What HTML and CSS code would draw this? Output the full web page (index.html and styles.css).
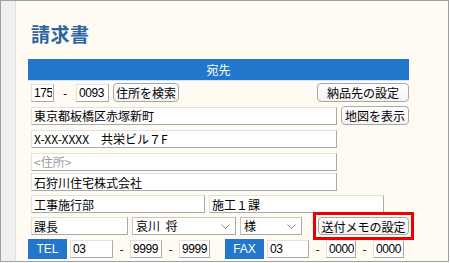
FILE: index.html
```html
<!DOCTYPE html>
<html lang="ja">
	<head>
		<meta charset="UTF-8">
		<title>請求書</title>
		<link rel="stylesheet" href="styles.css">
	</head>
	<body>
		<div class="window">
			<div class="side"></div>
			<div class="content">
				<h1 class="title">請求書</h1>
				<div class="section-bar">宛先</div>

				<div class="fields">
					<div class="row">
						<input class="field num w-23" type="text" value="175">
						<span class="dash">-</span>
						<input class="field num w-33" type="text" value="0093">
						<button class="btn w-66">住所を検索</button>
						<button class="btn w-92 push-right">納品先の設定</button>
					</div>
					<div class="row">
						<input class="field w-306" type="text" value="東京都板橋区赤塚新町">
						<button class="btn w-68">地図を表示</button>
					</div>
					<div class="row">
						<input class="field w-306" type="text" value="X-XX-XXXX　共栄ビル７F">
					</div>
					<div class="row">
						<input class="field w-306" type="text" placeholder="<住所>">
					</div>
				</div>

				<div class="fields fields-lower">
					<div class="row">
						<input class="field w-306" type="text" value="石狩川住宅株式会社">
					</div>
					<div class="row">
						<input class="field w-174" type="text" value="工事施行部">
						<input class="field w-175" type="text" value="施工１課">
					</div>
					<div class="row">
						<input class="field w-97" type="text" value="課長">
						<div class="select w-104">
							<span>哀川&nbsp;&nbsp;将</span>
							<svg class="chevron" width="9" height="5" viewBox="0 0 9 5"><path d="M0.5 0.5 L4.5 4.5 L8.5 0.5" fill="none" stroke="#8a8a8a" stroke-width="1"/></svg>
						</div>
						<div class="select w-62">
							<span>様</span>
							<svg class="chevron" width="9" height="5" viewBox="0 0 9 5"><path d="M0.5 0.5 L4.5 4.5 L8.5 0.5" fill="none" stroke="#8a8a8a" stroke-width="1"/></svg>
						</div>
						<span class="highlight">
							<button class="btn w-91 memo-btn">送付メモの設定</button>
						</span>
					</div>
					<div class="row row-tel">
						<span class="tag">TEL</span>
						<input class="field num w-43" type="text" value="03">
						<span class="dash">-</span>
						<input class="field num w-32" type="text" value="9999">
						<span class="dash">-</span>
						<input class="field num w-31" type="text" value="9999">
						<span class="tag tag-fax">FAX</span>
						<input class="field num w-42" type="text" value="03">
						<span class="dash">-</span>
						<input class="field num w-30" type="text" value="0000">
						<span class="dash">-</span>
						<input class="field num w-31" type="text" value="0000">
					</div>
				</div>
			</div>
		</div>
	</body>
</html>
```

FILE: styles.css
```css
body {
	margin: 0;
	background-color: #ffffff;
	font-family: "Noto Sans CJK JP", "Noto Sans", sans-serif;
	font-size: 12px;
	color: #000000;
}

.window {
	display: flex;
	width: 449px;
	height: 262px;
	box-sizing: border-box;
	border: 1px solid #a0a0a0;
	background-color: #fffaf2;
}

.side {
	width: 14px;
	flex-shrink: 0;
	background-color: #f0f0f0;
	border-right: 1px solid #dedede;
}

.content {
	flex-grow: 1;
	padding: 22px 0 0 12px;
}

.title {
	margin: 0 0 14px 3px;
	font-size: 19px;
	line-height: 22px;
	font-weight: 700;
	color: #2b64a3;
	letter-spacing: 0.5px;
}

.section-bar {
	width: 381px;
	height: 21px;
	line-height: 21px;
	background-color: #2277cc;
	border-bottom: 1px solid #d2e2f2;
	color: #ffffff;
	text-align: center;
	font-size: 12px;
}

.fields {
	display: flex;
	flex-direction: column;
	gap: 4px;
	width: 381px;
	margin-top: 2px;
}

.fields-lower {
	margin-top: 2px;
}

.row {
	display: flex;
	align-items: center;
	gap: 4px;
	height: 19px;
	padding-left: 3px;
}

.fields-lower .row {
	height: 18px;
}

.fields-lower .row-tel {
	height: 20px;
	padding-left: 0;
	gap: 3px;
}

.field {
	box-sizing: border-box;
	height: 18px;
	margin: 0;
	padding: 0 2px;
	background-color: #ffffff;
	border: 1px solid;
	border-color: #e4e1db #a9a9a9 #a9a9a9 #e4e1db;
	border-radius: 0;
	font-family: "Noto Sans CJK JP", "Noto Sans", sans-serif;
	font-size: 12px;
	line-height: 16px;
	color: #000000;
	outline: none;
}

.field.num {
	padding: 0 1px 0 2px;
	font-family: "Liberation Sans", sans-serif;
	letter-spacing: -0.4px;
}

.field::placeholder {
	color: #9a9a9a;
	opacity: 1;
}

.dash {
	width: 14px;
	text-align: center;
	line-height: 18px;
}

.row-tel .dash {
	width: 11px;
}

.btn {
	box-sizing: border-box;
	height: 19px;
	margin: 0;
	padding: 0;
	background: linear-gradient(#ffffff, #f2f2f2);
	border: 1px solid #a8a8a8;
	border-radius: 4px;
	font-family: "Noto Sans CJK JP", "Noto Sans", sans-serif;
	font-size: 12px;
	line-height: 17px;
	color: #000000;
	text-align: center;
}

.push-right {
	margin-left: auto;
}

.highlight {
	display: flex;
	margin: -5px -5px -5px 7px;
	padding: 2px;
	border: 3px solid #ee0000;
}

.memo-btn {
	height: 18px;
}

.select {
	box-sizing: border-box;
	display: flex;
	align-items: center;
	justify-content: space-between;
	height: 18px;
	padding: 0 5px 0 3px;
	background-color: #ffffff;
	border: 1px solid;
	border-color: #c8c5bf #a9a9a9 #a9a9a9 #c8c5bf;
	line-height: 16px;
}

.chevron {
	flex-shrink: 0;
}

.tag {
	box-sizing: border-box;
	width: 39px;
	height: 20px;
	line-height: 20px;
	background-color: #2277cc;
	color: #ffffff;
	text-align: center;
	font-family: "Liberation Sans", sans-serif;
	font-size: 12px;
}

.tag-fax {
	margin-left: 12px;
}

.w-23 { width: 23px; }
.w-30 { width: 30px; }
.w-31 { width: 31px; }
.w-32 { width: 32px; }
.w-33 { width: 33px; }
.w-42 { width: 42px; }
.w-43 { width: 43px; }
.w-62 { width: 62px; }
.w-66 { width: 66px; }
.w-68 { width: 68px; }
.w-91 { width: 91px; }
.w-92 { width: 92px; }
.w-97 { width: 97px; }
.w-104 { width: 104px; }
.w-174 { width: 174px; }
.w-175 { width: 175px; }
.w-306 { width: 306px; }
```
